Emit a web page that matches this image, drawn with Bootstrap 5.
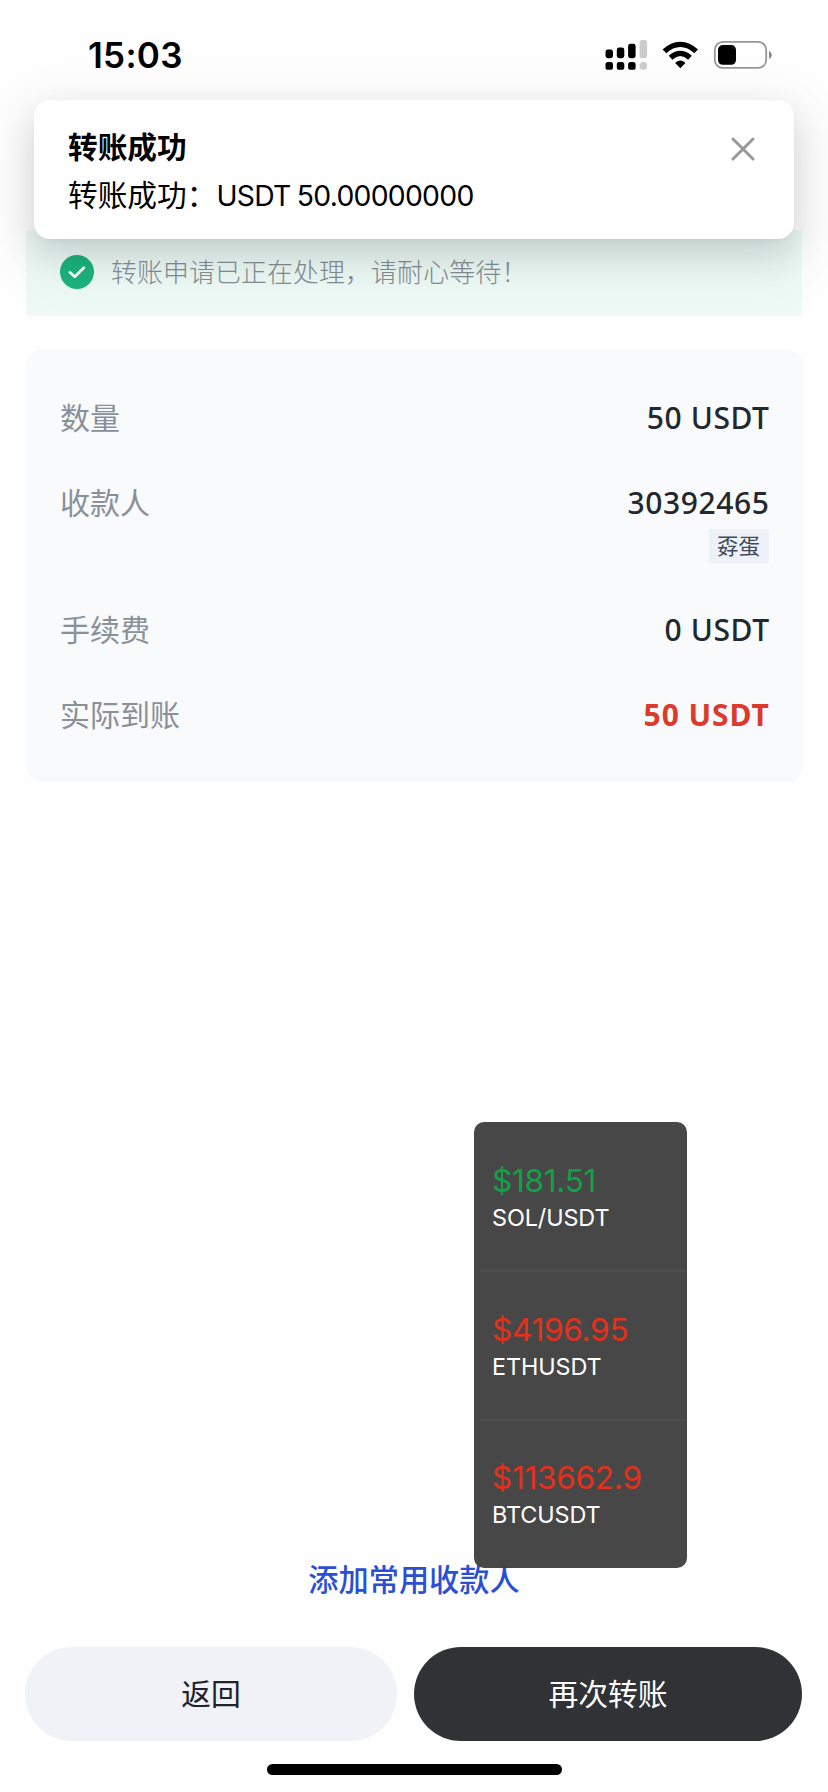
<!DOCTYPE html>
<html lang="zh-CN">
<head>
<meta charset="utf-8">
<meta name="viewport" content="width=device-width, initial-scale=1">
<title>转账成功</title>
<link href="https://cdn.jsdelivr.net/npm/bootstrap@5.3.0/dist/css/bootstrap.min.css" rel="stylesheet">
<style>
  body { font-family: Inter, "Noto Sans CJK SC", sans-serif; background: #fefefe; color: #000; }
  .screen { width: 828px; height: 1792px; }
  .status { height: 100px; padding: 11px 53px 0 88px; }
  .clock { font-size: 35px; font-weight: 600; line-height: 88px; letter-spacing: .3px; }
  .toast-box { left: 34px; top: 100px; width: 760px; height: 139px; border-radius: 16px; background: #fff; padding: 26px 34px 0;
    box-shadow: 0 14px 34px rgba(0,0,0,.12), 0 6px 12px -8px rgba(0,0,0,.08), 0 18px 56px 16px rgba(0,0,0,.06); z-index: 5; }
  .toast-title { font-size: 29.7px; line-height: 42px; font-weight: 600; }
  .toast-text { font-size: 29.7px; line-height: 42px; margin-top: 6px; }
  .toast-text span { font-size: 28.3px; letter-spacing: -.72px; word-spacing: -1px; }
  .notice { margin: 130px 26px 0; height: 86px; background: #edfaf6; padding: 0 34px 3px; font-size: 25.9px; letter-spacing: .12px; font-weight: 300; color: #858e95; border-radius: 0 0 4px 4px; gap: 17px; }
  .notice span { padding-top: 3px; }
  .panel { margin: 34px 25px 0 26px; height: 432px; background: #f8fafc; border-radius: 16px; padding: 46px 34px 0 34px; font-size: 30px; line-height: 44px; }
  .key { color: #8a9099; font-size: 30px; }
  .val { font-family: "Noto Sans", sans-serif; font-weight: 500; color: #23272e; font-size: 30px; letter-spacing: .6px; margin-right: -.6px; }
  .usdt { letter-spacing: .6px; }
  .total { letter-spacing: .9px; color: #db3b2c; }
  .tag-name { background: #eef1f8; color: #3f495a; font-size: 21.5px; line-height: 34px; padding: 0 8px; width: 60px; margin-top: 4px; white-space: nowrap; }
  .ticker { left: 474px; top: 1122px; width: 213px; height: 446px; border-radius: 10px; background: rgba(64,64,64,.96); padding-left: 6px; z-index: 4; }
  .quote { height: 148.4px; padding: 38px 0 0 12px; }
  .quote + .quote { border-top: 2px solid #4e4e4e; padding-top: 36.5px; }
  .price { font-size: 31.6px; line-height: 42px; font-weight: 400; letter-spacing: -.3px; }
  .pair { font-size: 23.4px; line-height: 30px; color: #fff; margin-top: 1px; letter-spacing: -.1px; }
  .up { color: #12a146; } .down { color: #e5301c; }
  .add-link { color: #2b4fd4; font-size: 30.2px; line-height: 44px; font-weight: 500; text-decoration: none; }
  .bottom { margin-top: auto; height: 234px; }
  .actions { padding: 45px 26px 0 25px; gap: 17px; }
  .pill { height: 94px; border-radius: 47px; font-size: 29.8px; font-weight: 400; border: 0; padding: 0; }
  .pill-back, .pill-back:hover { width: 372px; background: #f0f2f7; color: #202329; }
  .pill-again, .pill-again:hover { width: 388px; background: #303236; color: #fff; }
  .home-bar { width: 295px; height: 11px; border-radius: 6px; background: #000; margin: 23px 0 0 267px; }
</style>
</head>
<body>
<main class="screen position-relative overflow-hidden d-flex flex-column">
  <header class="status d-flex justify-content-between align-items-start">
    <div class="clock">15:03</div>
    <svg width="180" height="60" viewBox="595 26 180 60" style="margin-top:15px">
      <g>
        <rect x="605.5" y="49.5" width="7.5" height="8.7" rx="2.4"/><rect x="616.8" y="47.6" width="7.5" height="10.6" rx="2.4"/><rect x="628.1" y="43.8" width="7.5" height="14.4" rx="2.4"/>
        <rect x="639.6" y="40" width="7.5" height="18.2" rx="2.6" fill="#ccc"/>
        <rect x="605.5" y="62" width="7.5" height="7.8" rx="2.6"/><rect x="616.8" y="62" width="7.5" height="7.8" rx="2.6"/><rect x="628.1" y="62" width="7.5" height="7.8" rx="2.6"/>
        <rect x="639.6" y="62" width="7.5" height="7.8" rx="3.6" fill="#ccc"/>
      </g>
      <g fill="none" stroke="#000" stroke-width="5.4">
        <path d="M664.5 51.4C674.2 42 686.4 42 696.1 51.4"/>
        <path d="M670.6 57.7C676.8 52 683.8 52 690 57.7"/>
      </g>
      <path d="M680.3 68.3l-5.1-5.3c2.6-3.4 7.6-3.4 10.2 0z"/>
      <rect x="714.8" y="41.9" width="51.4" height="26" rx="8" fill="none" stroke="#969696" stroke-width="1.8"/>
      <rect x="718" y="45" width="18" height="19.8" rx="4.8"/>
      <path d="M769 51c3.6 1.7 3.6 6.3 0 8z" fill="#858585"/>
    </svg>
  </header>

  <section class="toast-box position-absolute" role="alert">
    <div class="d-flex justify-content-between">
      <div class="toast-title">转账成功</div>
      <svg width="24" height="24" viewBox="0 0 24 24" style="margin:11px 5px 0 0"><path d="M2 2l20 20M22 2L2 22" stroke="#999" stroke-width="3" stroke-linecap="round"/></svg>
    </div>
    <div class="toast-text">转账成功：<span>USDT 50.00000000</span></div>
  </section>

  <section class="notice d-flex align-items-center">
    <svg width="34" height="34" viewBox="0 0 34 34"><circle cx="17" cy="17" r="17" fill="#1cb47f"/><path d="M10 17.5l4.8 4.3 9-9" fill="none" stroke="#fff" stroke-width="2.8" stroke-linecap="round" stroke-linejoin="round"/></svg>
    <span>转账申请已正在处理，请耐心等待！</span>
  </section>

  <section class="panel">
    <div class="d-flex justify-content-between" style="height:85px"><span class="key">数量</span><span class="val usdt">50 USDT</span></div>
    <div class="d-flex justify-content-between" style="height:127px"><span class="key">收款人</span>
      <div class="d-flex flex-column align-items-end"><span class="val">30392465</span><span class="tag-name">孬蛋</span></div>
    </div>
    <div class="d-flex justify-content-between" style="height:85px"><span class="key">手续费</span><span class="val usdt">0 USDT</span></div>
    <div class="d-flex justify-content-between"><span class="key">实际到账</span><span class="val total fw-bold">50 USDT</span></div>
  </section>

  <aside class="ticker position-absolute">
    <div class="quote"><div class="price up">$181.51</div><div class="pair">SOL/USDT</div></div>
    <div class="quote"><div class="price down">$4196.95</div><div class="pair">ETHUSDT</div></div>
    <div class="quote"><div class="price down">$113662.9</div><div class="pair">BTCUSDT</div></div>
  </aside>

  <footer class="bottom">
    <div class="text-center"><a class="add-link" href="#">添加常用收款人</a></div>
    <div class="actions d-flex">
      <button class="btn pill pill-back">返回</button>
      <button class="btn pill pill-again">再次转账</button>
    </div>
    <div class="home-bar"></div>
  </footer>
</main>
<script src="https://cdn.jsdelivr.net/npm/bootstrap@5.3.0/dist/js/bootstrap.bundle.min.js"></script>
</body>
</html>
